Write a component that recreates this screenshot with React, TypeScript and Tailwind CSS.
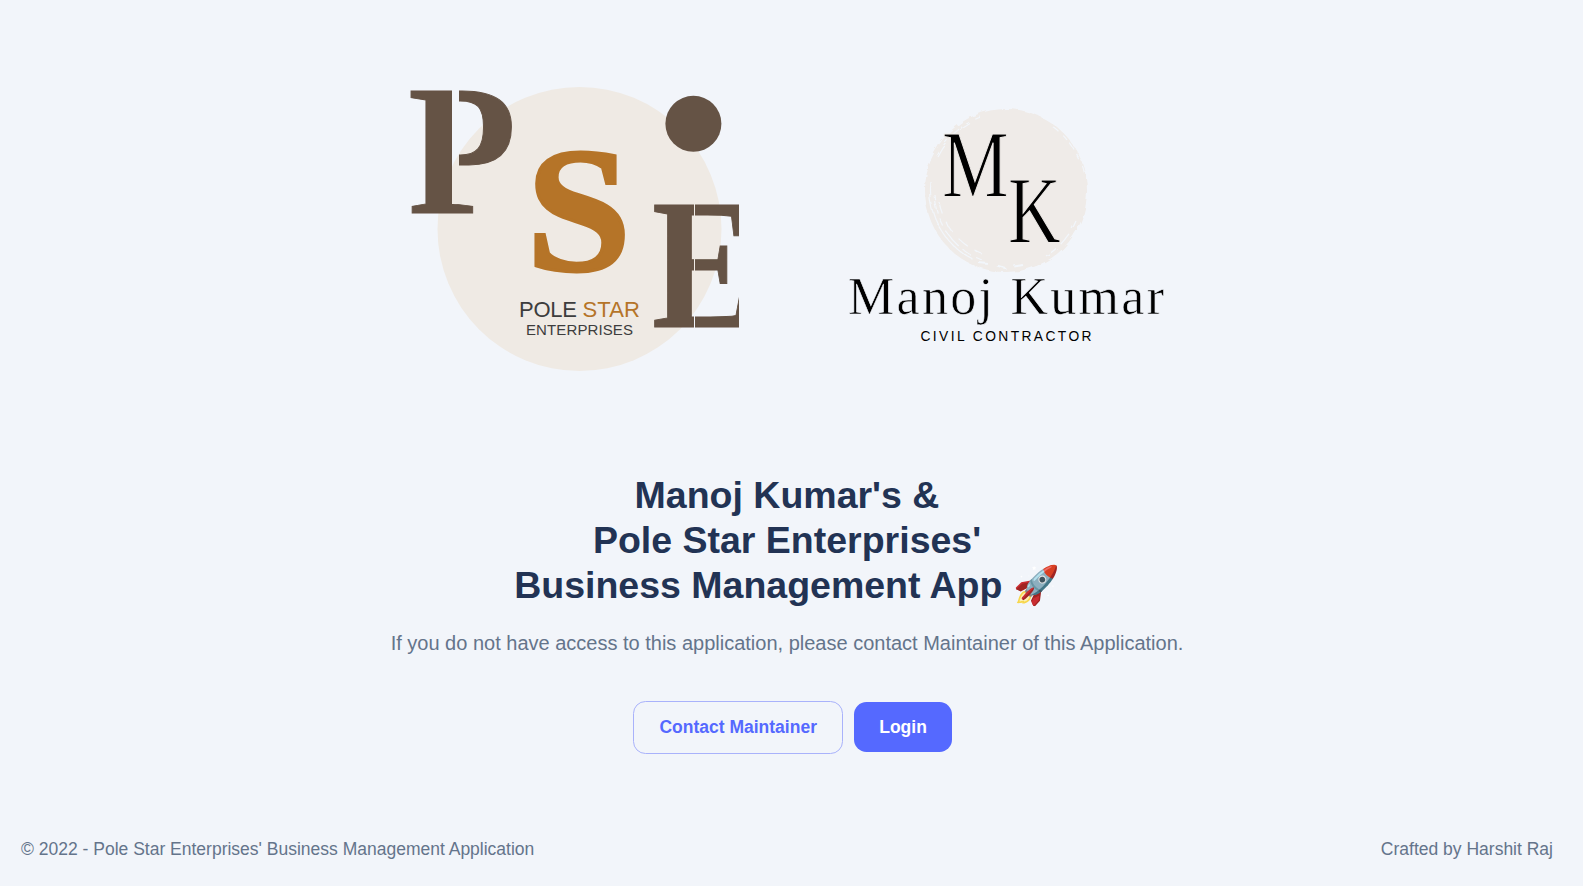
const serif = "font-['Liberation_Serif',serif]";
const sans = "font-['Liberation_Sans',sans-serif]";

function PoleStarLogo() {
  return (
    <svg width="329" height="300" viewBox="410 80 329 300" role="img" aria-label="Pole Star Enterprises">
      <defs>
        <mask id="p-cut" maskUnits="userSpaceOnUse" x="400" y="80" width="130" height="150">
          <rect x="400" y="80" width="130" height="150" fill="#fff" />
          <rect x="452" y="84" width="7" height="120" fill="#000" />
        </mask>
        <mask id="e-cut" maskUnits="userSpaceOnUse" x="640" y="190" width="110" height="150">
          <rect x="640" y="190" width="110" height="150" fill="#fff" />
          <rect x="694" y="198" width="1" height="134" fill="#000" />
        </mask>
      </defs>
      <circle cx="579.5" cy="229" r="142" fill="#efeae4" />
      <circle cx="693.4" cy="123.8" r="28" fill="#655345" />
      <g className={serif} fontWeight="700" fill="#655345">
        <g mask="url(#p-cut)">
          <text transform="translate(408 212.5) scale(.95 1)" fontSize="187" stroke="#655345" strokeWidth="1">P</text>
        </g>
        <g mask="url(#e-cut)">
          <text transform="translate(652 326.500) scale(.83 1)" fontSize="186" stroke="#655345" strokeWidth="1">E</text>
        </g>
      </g>
      <text
        className={serif}
        transform="translate(526 270) scale(1.07 1)"
        fontSize="177"
        fontWeight="700"
        fill="#b57428"
        stroke="#b57428"
        strokeWidth="3"
      >
        S
      </text>
      <g className={sans}>
        <text x="519" y="317" fontSize="22" textLength="58" fill="#3d3d3d">POLE</text>
        <text x="582.500" y="317" fontSize="22" textLength="57.500" fill="#b57428">STAR</text>
        <text x="526" y="335" fontSize="15" textLength="107" fill="#3d3d3d">ENTERPRISES</text>
      </g>
    </svg>
  );
}

function ManojKumarLogo() {
  return (
    <svg width="335" height="300" viewBox="840 80 335 300" role="img" aria-label="Manoj Kumar Civil Contractor">
      <defs>
        <filter id="brush" x="-10%" y="-10%" width="120%" height="120%">
          <feTurbulence type="fractalNoise" baseFrequency=".09" numOctaves="3" seed="8" />
          <feDisplacementMap in="SourceGraphic" scale="5" />
        </filter>
      </defs>
      <g filter="url(#brush)">
        <ellipse cx="1006" cy="190.500" rx="81" ry="81.500" fill="#efebe8" />
        <g fill="none" stroke="#f2f6fb" strokeWidth="1.200">
          <path d="M930 181A77 77 0 0 0 973 259" />
          <path d="M934 194A74 74 0 0 0 982 260" strokeDasharray="19 5 9 7" />
          <path d="M939 202A71 71 0 0 0 982 254" strokeDasharray="12 9" />
          <path d="M937 156A78 78 0 0 1 981 117" strokeDasharray="20 7" />
          <path d="M1046 256A77 77 0 0 0 1076 221" strokeDasharray="13 6" />
          <path d="M1053 127A78 78 0 0 1 1084 174" strokeDasharray="7 5" />
          <path d="M979 263L995 265L1005 268L1023 265" strokeWidth="2" strokeDasharray="9 9" />
        </g>
      </g>
      <g className={serif} fill="#000">
        <g stroke="#efebe8" strokeWidth="1.200">
          <text transform="translate(942 197) scale(.78 1)" fontSize="96">M</text>
          <text transform="translate(1008 243) scale(.76 1)" fontSize="96">K</text>
        </g>
        <text x="848" y="313.500" fontSize="52" textLength="316" stroke="#f2f5fa" strokeWidth=".6">
          Manoj Kumar
        </text>
      </g>
      <text className={sans} x="920.500" y="340.500" fontSize="13.800" textLength="171">CIVIL CONTRACTOR</text>
    </svg>
  );
}

export default function App() {
  return (
    <div className="h-[886px] w-full overflow-hidden bg-[#f2f5fa] font-['Liberation_Sans',sans-serif]">
      <div className="flex h-full w-[1574px] flex-col">
        <main className="flex flex-1 flex-col items-center">
          <div className="flex w-full gap-[101px] pt-20 pl-[410px]">
            <PoleStarLogo />
            <ManojKumarLogo />
          </div>
          <h1 className="mt-[93px] text-center text-[37.5px] leading-[45px] font-bold text-[#223354]">
            Manoj Kumar's &amp;
            <br />
            Pole Star Enterprises'
            <br />
            Business Management App 🚀
          </h1>
          <p className="mt-[18px] text-[20px] leading-[35px] text-[#64748b]">
            If you do not have access to this application, please contact Maintainer of this Application.
          </p>
          <div className="mt-10 flex items-start gap-[11.25px] pl-[11.25px]">
            <button className="h-[53px] rounded-[12.5px] border border-[#a9b2fb] px-[25px] text-[17.5px] font-bold text-[#5569ff]">
              Contact Maintainer
            </button>
            <button className="mt-px h-[50px] rounded-[12.5px] bg-[#5569ff] px-[25px] pt-px text-[17.5px] font-bold text-white">
              Login
            </button>
          </div>
        </main>
        <footer className="flex justify-between px-[21px] pb-[22px] text-[17.5px] leading-[30px] text-[#64748b]">
          <span>© 2022 - Pole Star Enterprises' Business Management Application</span>
          <span>Crafted by Harshit Raj</span>
        </footer>
      </div>
    </div>
  );
}
